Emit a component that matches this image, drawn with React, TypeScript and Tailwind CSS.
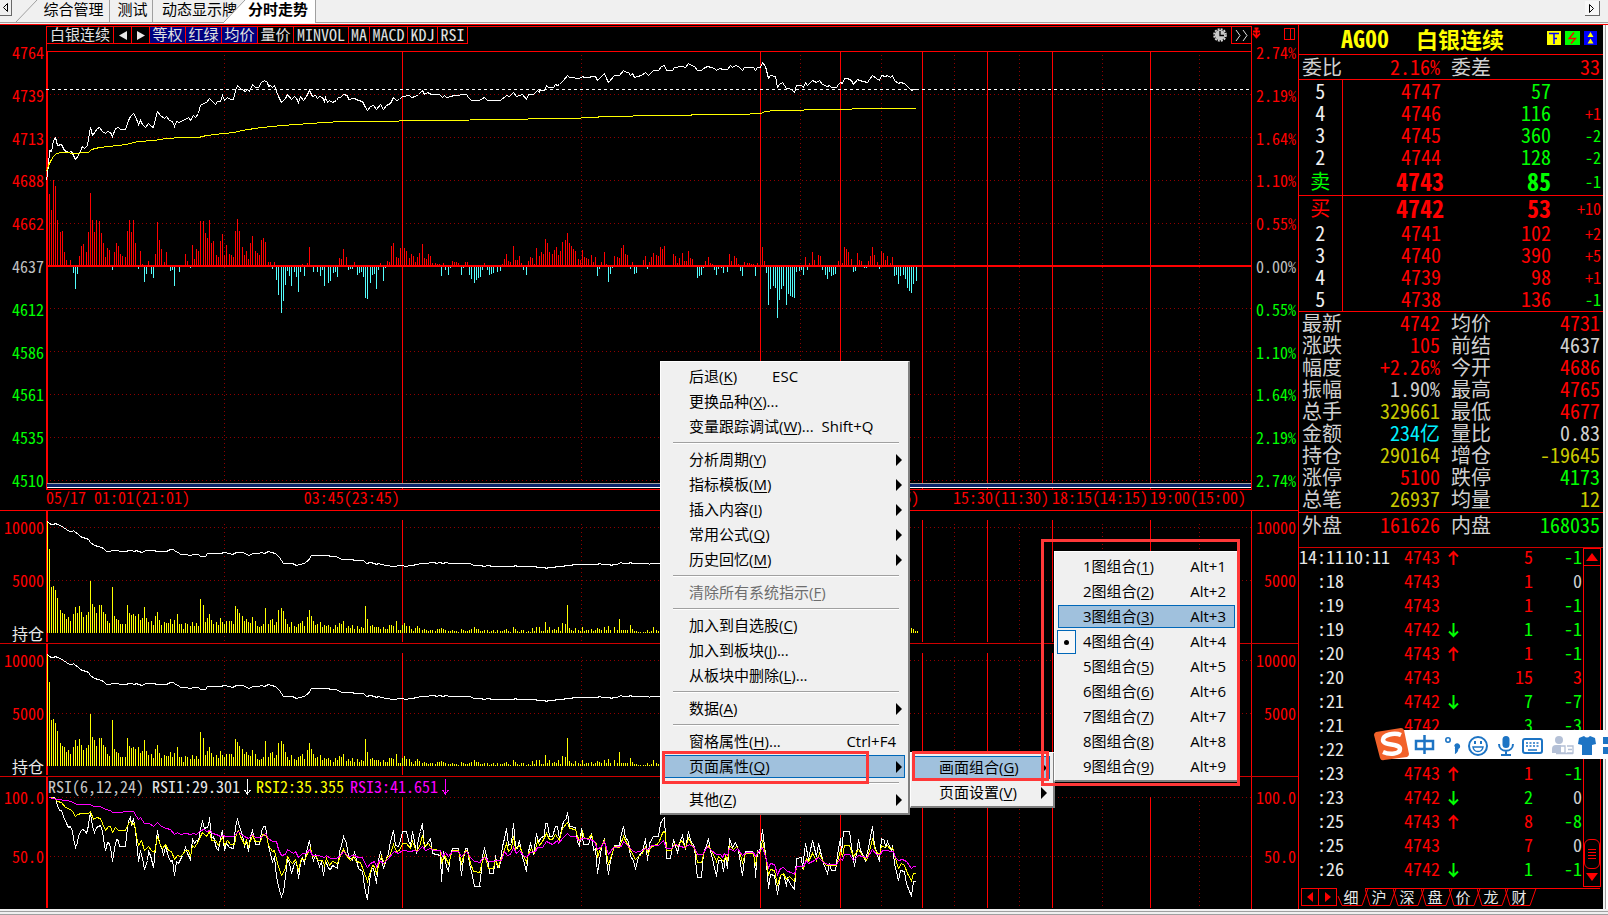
import type { ReactNode } from 'react';

const MONO = "font-['Noto_Sans_Mono_CJK_SC','Noto_Sans_CJK_SC',monospace]";
const UI = "font-['Open_Sans','Noto_Sans_CJK_SC',sans-serif]";

// series are stored as "x,y" pairs on a finer grid, SX / SY units to one chart unit
const SX = 2.904;
const SY = 3;

function parse(data: string, ox: number, oy: number, kx: number) {
  return data
    .trim()
    .split(/\s+/)
    .map((p) => {
      const [x, y] = p.split(',').map(Number);
      return [Math.floor(ox + x / kx), Math.floor(oy + y / SY)];
    });
}

const line = (data: string, ox: number, oy: number, kx: number) =>
  parse(data, ox, oy, kx)
    .map(([x, y]) => `${x + 0.5},${y + 0.5}`)
    .join(' ');

const bars = (data: string, ox: number, oy: number, base: number) =>
  parse(data, ox, oy, SY)
    .map(([x, y]) => `M${x + 0.5} ${base}V${y}`)
    .join('');

const PRICE_A =
  '136,540 140,495 144,450 150,455 155,420 162,413 168,435 180,433 188,450 198,457 208,455 214,465 220,478 228,465 240,440 246,445 254,437 258,415 263,382 270,405 282,385 290,382 298,395 305,400 312,393 320,398 326,408 336,385 345,382 350,388 364,388 372,360 380,350 388,340 393,350 403,373 408,360 414,373 422,382 432,370 440,378 446,382 457,333 466,345 478,355 484,350 492,360 500,363 507,379 514,365 522,368 530,362 540,357 546,352 552,362 562,345 568,352 576,340 582,315 590,310 600,307 608,295 616,305 626,312 632,305 640,303 647,287 653,300 660,293 668,298 678,297 684,270 690,257 698,265 706,270 712,275 718,268 724,273 734,254 742,262 752,262 760,248 768,240 776,247 780,258 786,255 790,262 797,256 804,275 810,290 818,307 828,295 836,284 846,299 854,290 860,296 866,306 874,290 880,302 890,290 900,270 908,290 916,287 922,294 928,288 936,293 942,305 946,293 950,306 956,302 966,306 978,300 984,292 990,293 998,284 1008,287 1012,297 1030,295 1040,302 1052,304 1060,323 1068,331 1076,320 1086,317 1094,329 1104,312 1114,328 1122,315 1134,310 1142,292 1150,300 1160,297 1168,288 1188,287 1196,291 1206,289 1216,284 1226,272 1232,284 1242,277 1254,283 1276,284 1284,292 1290,287 1296,292 1310,290 1318,285 1356,284 1360,291 1370,300 1392,301 1406,292 1416,300 1454,300 1470,285 1480,290 1492,278 1500,290 1516,284 1528,298 1536,284 1550,283 1560,272 1568,277';
const PRICE_B =
  '116,272 122,270 128,270 134,257 142,262 154,261 162,254 168,256 174,253 184,240 196,227 202,232 232,234 240,229 246,232 260,232 266,228 272,230 278,228 284,242 292,233 304,221 310,234 316,246 332,227 346,226 358,212 366,217 372,218 380,225 384,221 390,233 400,228 410,226 422,217 430,225 446,212 460,210 470,200 478,197 484,211 500,210 506,203 530,198 540,203 548,191 556,197 566,199 574,211 586,210 592,204 604,198 614,203 624,206 630,210 636,205 648,208 662,209 668,197 676,201 684,196 694,200 704,211 710,202 736,203 742,210 748,203 756,201 763,188 770,198 774,212 780,235 786,227 800,229 806,262 812,253 820,247 826,255 832,265 840,264 848,270 856,276 862,257 876,257 882,262 888,247 894,256 900,250 908,241 920,248 928,241 936,252 950,260 956,257 962,262 976,262 984,252 990,247 996,250 1000,236 1010,236 1020,241 1028,253 1038,237 1044,242 1066,247 1074,238 1082,227 1092,234 1102,240 1108,227 1120,229 1126,227 1134,232 1140,227 1146,240 1156,250 1162,247 1176,250 1186,263 1194,271 1200,268 1215,268';
const AVG_A =
  '136,515 142,495 148,485 156,470 164,461 180,458 228,459 236,457 258,457 266,449 290,441 340,436 366,432 400,425 450,420 480,416 530,413 576,412 600,405 650,400 680,396 700,391 760,383 820,375 900,370 990,365 1090,363 1230,360 1500,358 1568,356';
const AVG_B =
  '116,356 190,355 284,352 290,349 384,349 388,346 554,346 558,343 724,343 728,340 756,340 770,335 800,332 880,331 884,328 1020,328 1024,325 1208,325';

const UP_A =
  '28,54 34,102 40,12 46,30 52,132 61,168 67,165 73,228 79,252 91,252 118,240 124,210 130,204 139,228 145,168 151,51 157,132 163,168 169,132 178,135 184,171 190,201 196,243 202,216 208,222 223,228 229,201 235,210 241,234 247,240 256,243 262,165 268,132 274,168 280,132 286,201 301,225 307,264 325,255 346,234 352,138 358,192 364,219 373,258 379,228 436,234 442,255 457,207 463,249 469,219 475,225 481,135 490,135 496,171 502,186 508,132 514,201 520,195 529,237 535,243 541,195 547,174 553,237 559,207 568,234 574,237 580,243 586,165 592,129 598,165 607,213 613,237 619,225 625,249 631,201 637,180 646,225 652,231 658,237 664,192 670,186 676,198 685,258 691,258 703,258 787,264 802,261 808,213 898,246 904,249 910,219 919,243 943,258 1021,261 1042,255 1048,258 1054,210 1060,201 1069,243 1075,246 1081,216 1093,216 1099,225 1108,246 1114,234 1120,240 1126,258 1132,243 1138,231 1147,204 1153,246 1159,249 1165,234 1171,240 1177,261 1186,261 1192,264 1198,264 1210,261 1237,255 1243,258 1249,258 1255,261 1276,258 1282,258 1333,261 1387,264 1393,249 1399,234 1405,255 1411,258 1420,210 1426,252 1432,252 1438,240 1444,261 1465,255 1471,243 1477,246 1483,264 1489,216 1498,240';
const DOWN_A =
  '100,291 106,339 112,294 217,282 295,279 313,318 319,294 334,294 340,306 391,285 397,282 403,330 418,288 451,276 697,279 709,312 715,357 724,411 730,375 736,327 742,285 748,300 754,330 763,288 769,303 775,348 781,288 793,300 820,288 832,288 841,300 847,282 853,330 865,321 871,315 880,291 886,288 892,303 925,282 931,279 937,279 952,297 958,291 964,288 970,303 976,366 982,369 991,321 997,297 1003,294 1009,339 1015,282 1030,315 1036,276 1204,300 1216,282 1225,297 1231,276 1264,297 1270,276 1288,297 1294,309 1303,321 1309,312 1315,306 1321,303 1327,282 1342,282 1348,297 1354,294 1360,291 1372,288 1381,285 1450,282 1459,297';
const UP_B =
  '244,66 250,72 256,27 262,39 268,66 277,72 283,60 289,51 295,75 301,63 307,36 316,30 322,9 328,39 334,48 340,57 346,63 355,87 361,90 367,60 373,81 379,84 385,87 394,75 400,96 406,81 424,96 433,66 439,102 463,78 472,81 478,84 484,54 490,45 496,72 502,75 517,96 550,90 556,78 568,96 574,81 580,69 589,75 595,78 601,51 607,57 613,48 640,72 646,78 652,99 658,84 667,69 673,93 679,93 685,63 691,84 697,87 736,93 745,81 751,99 757,102 808,72 814,93 823,78 829,84 835,102 853,96 862,99 868,99 874,102 880,102 892,99 907,51 913,93 1036,81 1048,99 1057,66 1063,90 1075,75 1081,78 1135,93 1147,99 1153,51 1159,57 1165,66 1174,87 1192,69 1198,90 1204,93 1225,93 1231,78 1237,51 1243,75 1252,96 1264,63 1270,69 1276,90 1282,78 1291,99 1297,81';
const DOWN_B =
  '412,138 418,117 445,156 451,132 457,114 511,117 523,132 529,129 562,117 712,144 718,138 724,135 730,114 763,120 769,135 775,117 784,114 790,129 802,126 841,123 847,138 886,138 919,129 925,225 931,177 940,168 946,174 952,264 958,210 964,177 970,168 979,225 985,192 991,198 997,201 1003,204 1009,126 1018,123 1024,120 1030,135 1042,120 1087,120 1096,135 1102,147 1108,126 1114,138 1120,135 1126,132 1180,126 1186,123 1213,114 1219,114 1258,117 1303,138 1309,135 1315,162 1321,138 1330,135 1336,147 1342,174 1348,183 1354,189 1360,162 1369,153';

const VOL_A =
  '142,183 148,267 154,381 160,378 166,390 172,414 181,450 187,459 193,462 199,477 205,471 211,483 220,462 226,441 232,459 238,438 244,456 250,471 259,465 265,456 271,363 277,432 283,441 289,459 298,435 304,435 310,456 316,462 322,483 328,489 337,381 343,468 349,477 355,480 361,492 367,492 376,492 382,435 388,459 394,465 400,462 406,468 415,462 421,480 427,474 433,441 439,474 445,486 454,483 460,495 466,468 472,456 478,480 484,495 493,486 499,489 505,489 511,477 517,492 523,480 532,462 538,492 544,492 550,507 556,489 562,492 571,498 577,486 583,498 589,489 595,498 601,417 610,435 616,486 622,474 628,462 634,480 640,492 649,486 655,495 661,474 667,486 673,492 679,483 688,483 694,483 700,492 706,438 712,447 718,459 727,468 733,483 739,477 745,486 751,489 757,471 766,483 772,498 778,501 784,498 790,492 796,444 805,492 811,480 817,477 823,495 829,486 835,450 844,444 850,453 856,477 862,492 868,501 874,486 883,498 889,501 895,492 901,489 907,483 913,498 922,471 928,450 934,468 940,483 946,495 952,492 961,486 967,501 973,495 979,498 985,495 991,501 1000,507 1006,495 1012,501 1018,489 1024,492 1030,483 1039,504 1045,498 1051,504 1057,495 1063,507 1072,498 1078,507 1084,501 1090,504 1096,438 1102,477 1111,498 1117,495 1123,501 1129,501 1135,501 1141,507 1150,501 1156,507 1162,507 1168,495 1174,495 1180,498 1189,483 1195,510 1201,510';
const VOL_B =
  '7,375 13,369 19,378 28,378 34,387 40,393 46,384 52,378 58,384 67,390 73,387 79,390 85,393 91,390 97,390 106,393 112,387 118,387 124,384 130,387 136,390 145,393 151,393 157,390 163,393 169,393 175,396 184,387 190,390 196,393 202,393 208,390 214,387 223,381 229,387 235,387 241,393 247,393 253,390 262,390 268,396 274,393 280,390 286,396 292,390 301,393 307,393 313,390 319,387 325,393 331,396 340,381 346,387 352,393 358,396 364,390 370,390 379,396 385,393 391,396 397,384 403,393 409,381 418,381 424,393 430,393 436,366 442,390 448,381 457,390 463,387 469,390 475,381 481,393 487,369 496,372 502,315 508,384 514,390 520,393 526,384 535,390 541,393 547,381 553,393 559,390 565,390 574,387 580,393 586,390 592,384 598,387 604,390 613,381 619,390 625,378 631,390 643,381 652,390 658,357 664,390 670,390 676,390 682,390 691,375 697,387 703,393 709,393 715,396 721,396 730,396 736,396 742,390 748,396 754,393 760,381 769,390 775,393 1534,384 1540,387 1546,393 1552,393';
const OI_A =
  '142,183 148,189 154,193 160,193 166,189 172,193 181,195 190,202 199,207 208,213 216,214 220,210 226,216 232,220 240,229 246,233 258,234 265,238 271,247 283,256 295,258 304,262 310,265 320,273 328,275 337,271 352,272 360,274 378,274 384,272 395,270 402,274 408,271 414,274 428,276 436,272 460,271 472,274 500,274 510,268 520,267 526,274 534,278 542,282 556,282 570,287 580,284 594,283 602,289 616,289 622,280 660,280 672,277 688,280 698,284 708,277 730,277 738,283 748,287 758,281 774,280 784,277 794,280 806,274 814,278 826,281 838,292 850,310 878,310 890,315 898,313 912,311 920,305 926,300 934,286 984,286 990,289 1010,290 1024,298 1056,298 1064,301 1090,301 1098,311 1112,307 1122,311 1129,314 1135,310 1144,314 1160,317 1180,318 1200,317 1220,319 1228,316 1240,316 1246,313 1270,311 1302,308 1310,311 1318,307 1330,311 1336,307 1350,310 1412,310 1420,316 1440,316';
const OI_B =
  '240,196 253,199 262,196 280,199 340,199 346,196 352,199 406,199 412,202 434,202 439,205 445,202 464,202 470,199 490,199 496,196 514,196 520,193 592,193 598,190 608,193 628,193 634,196 640,193 652,193 661,187 670,190 684,190 691,187 697,190 745,190 748,193 752,190 860,190';

const RSI1_A =
  '148,112 160,113 166,115 172,135 178,152 184,150 190,170 198,190 206,203 210,200 216,215 220,235 226,262 232,248 236,228 242,215 248,208 254,210 260,220 264,195 268,170 272,160 278,200 284,218 290,203 300,197 306,215 310,235 316,270 322,248 328,250 334,280 338,303 342,265 350,237 354,240 358,258 376,258 380,225 386,185 390,170 394,195 400,175 406,215 412,270 416,303 420,270 426,295 434,328 442,300 446,273 450,285 460,322 466,265 472,212 478,248 486,270 490,285 496,260 504,290 510,305 516,300 524,345 530,303 536,310 546,285 552,270 556,262 562,280 572,298 576,235 582,250 588,240 594,245 600,205 606,185 614,205 624,200 629,173 634,235 640,230 648,265 656,270 662,235 667,210 673,272 680,250 688,262 700,265 706,200 712,178 718,200 726,225 732,260 740,245 746,275 752,230 758,210 766,252 778,252 784,215 790,200 796,200 802,240 808,270 818,305 824,290 830,350 838,390 845,410 850,395 856,350 862,295 868,310 874,340 882,310 888,305 895,355 902,310 908,295 914,310 920,275 928,240 934,280 940,300 946,285 952,300 958,320 964,305 970,345 976,300 984,325 990,328 996,315 1004,320 1012,325 1018,275 1024,255 1031,228 1038,250 1044,290 1056,300 1062,275 1068,300 1074,325 1086,335 1092,380 1098,410 1102,415 1108,365 1114,325 1120,325 1130,370 1136,300 1142,275 1150,325 1158,295 1166,280 1172,245 1180,210 1186,255 1196,260 1202,240 1208,215 1218,215 1224,240 1230,255 1236,215 1242,245 1248,280 1256,235 1262,215 1268,190 1274,262 1284,245 1290,235 1296,280 1320,285 1325,365 1330,275 1338,320 1345,335 1352,285 1358,265 1374,265 1378,290 1384,345 1390,295 1396,265 1402,265 1408,310 1416,350 1424,378 1440,380';
const RSI1_B =
  '58,380 62,330 66,290 72,262 76,290 82,310 86,340 96,340 102,285 108,322 116,322 122,260 128,235 135,205 140,255 150,250 155,190 160,260 166,265 172,240 178,280 184,300 192,335 198,275 206,250 214,282 222,220 228,248 234,235 244,225 248,190 254,190 260,228 270,228 276,200 282,200 288,235 294,208 300,185 308,175 313,158 318,200 334,202 340,245 346,258 354,205 360,252 374,252 382,220 388,270 394,265 400,340 406,300 412,262 420,235 426,300 432,342 438,300 448,255 462,255 468,220 474,200 480,232 490,245 496,290 504,300 510,328 518,290 530,275 538,235 544,300 550,250 562,228 576,228 582,190 590,175 594,172 600,295 612,295 620,237 632,278 640,240 646,225 654,268 664,215 670,240 680,260 688,330 690,352 700,352 708,280 716,255 721,235 728,270 736,310 744,350 750,300 760,300 766,335 772,290 776,325 784,235 792,262 800,248 808,270 814,310 820,345 828,275 850,275 854,295 858,352 864,270 870,280 878,208 884,255 890,310 896,385 902,342 912,345 922,402 930,345 938,340 948,380 952,355 964,375 970,388 976,295 992,293 996,325 1004,250 1012,298 1024,242 1034,290 1042,250 1048,275 1056,310 1066,340 1074,310 1078,330 1090,330 1098,265 1104,235 1108,280 1114,215 1130,215 1136,260 1146,320 1156,238 1164,270 1178,302 1186,262 1197,200 1204,255 1218,305 1224,235 1232,240 1236,262 1242,245 1252,270 1256,255 1262,310 1274,362 1280,330 1290,335 1298,370 1304,395 1311,405 1316,365 1323,365';
const RSI2_A =
  '148,112 166,114 172,125 184,128 196,142 210,148 218,155 226,168 232,163 244,160 256,161 264,160 272,155 280,178 288,172 300,175 308,190 316,210 324,198 330,200 338,218 346,203 356,210 376,210 384,190 390,185 396,192 402,190 408,230 414,255 424,240 434,270 444,258 454,272 462,278 466,265 472,230 480,255 488,265 496,252 506,272 514,275 524,298 532,285 540,290 548,282 556,270 564,270 572,290 578,255 584,262 596,245 602,230 608,218 618,228 628,215 634,240 646,240 656,255 668,228 674,255 682,242 690,252 702,252 708,220 714,210 722,230 732,252 740,240 746,260 756,225 766,245 780,245 788,222 798,225 806,255 816,275 824,270 832,310 845,345 856,325 862,290 870,305 878,310 886,298 895,330 904,295 912,300 920,285 930,265 938,290 946,285 956,300 966,300 974,315 978,295 988,315 996,305 1012,310 1020,285 1030,268 1040,285 1050,300 1060,290 1070,305 1082,308 1090,330 1102,365 1110,335 1118,315 1124,320 1130,340 1138,305 1144,290 1152,310 1162,290 1168,290 1180,252 1188,275 1198,272 1206,250 1220,250 1230,265 1238,245 1248,275 1258,258 1268,225 1274,260 1284,250 1296,268 1320,270 1325,310 1332,285 1345,310 1356,270 1376,272 1384,310 1396,272 1402,275 1410,310 1420,335 1440,338';
const RSI2_B =
  '58,338 64,305 72,285 78,305 84,325 98,325 104,300 112,318 122,285 128,268 135,250 142,275 150,265 155,230 162,268 172,255 182,280 194,307 200,280 208,265 216,280 224,240 230,255 240,245 250,220 260,238 270,238 278,222 288,240 298,205 313,188 318,205 334,208 340,230 348,240 356,215 362,235 374,235 382,222 388,245 396,250 400,292 408,265 420,240 432,312 440,285 450,260 464,262 474,230 484,248 494,270 510,298 518,290 528,282 538,262 546,280 552,262 576,250 584,225 592,215 596,218 600,272 614,272 622,250 632,260 644,242 654,262 664,235 674,255 684,270 690,306 702,306 710,275 721,255 732,278 744,305 752,290 766,305 772,290 776,302 784,255 794,268 804,258 812,275 820,308 830,280 852,280 858,315 864,275 872,275 878,240 886,285 896,345 902,328 912,330 922,375 932,345 940,340 948,358 956,350 970,365 976,318 994,318 998,325 1006,295 1012,305 1024,280 1034,300 1044,280 1054,300 1064,315 1092,317 1104,270 1110,290 1116,257 1132,257 1144,290 1156,268 1168,285 1180,300 1190,270 1197,237 1208,270 1218,287 1224,255 1234,262 1242,255 1250,268 1256,262 1264,295 1274,325 1282,310 1292,315 1300,340 1311,360 1316,340 1323,340';
const RSI3_A =
  '148,112 170,117 200,122 214,123 228,132 270,132 280,140 300,140 316,148 330,150 338,156 400,155 410,168 414,178 422,172 434,190 448,190 460,198 472,186 484,198 500,205 510,207 524,222 532,217 540,222 560,220 572,224 580,220 590,222 602,212 612,208 620,214 630,210 638,220 650,222 660,228 670,225 676,230 700,230 706,222 714,215 724,222 734,230 746,234 756,222 766,232 784,232 796,220 806,235 818,243 828,245 834,268 845,287 856,283 862,268 880,280 886,275 895,292 906,280 920,280 928,268 938,285 956,285 964,288 974,292 978,285 990,296 1010,295 1022,285 1030,275 1044,290 1064,285 1074,292 1086,292 1094,308 1102,322 1112,310 1122,305 1130,318 1138,302 1150,310 1166,295 1176,280 1184,275 1196,280 1206,270 1232,275 1244,272 1252,275 1260,265 1268,258 1276,270 1290,265 1300,270 1320,270 1328,288 1336,278 1346,290 1356,275 1374,275 1384,290 1400,275 1410,292 1422,305 1440,306';
const RSI3_B =
  '58,306 66,295 74,293 84,303 120,302 130,275 138,285 148,282 156,262 164,280 172,270 184,285 194,293 204,278 220,275 226,262 240,262 250,243 268,252 282,240 286,250 298,235 313,220 320,228 336,230 344,240 356,235 380,238 392,245 400,268 410,258 420,245 432,282 446,262 468,260 476,245 490,258 500,270 510,277 530,270 540,265 548,268 556,257 576,255 592,240 600,265 614,265 626,252 640,258 652,262 666,252 680,262 690,283 704,283 720,260 730,270 744,283 756,282 762,292 768,280 776,287 784,265 796,275 806,265 820,287 832,277 852,278 858,290 866,275 872,272 878,262 888,290 896,322 902,310 914,312 922,342 930,325 938,322 950,335 964,337 972,342 976,318 998,320 1006,300 1012,310 1030,302 1042,293 1054,305 1066,313 1094,312 1104,295 1112,300 1118,283 1132,284 1144,300 1158,285 1170,290 1184,292 1197,268 1210,282 1220,283 1228,270 1240,272 1252,275 1258,275 1266,292 1274,300 1284,298 1296,305 1311,325 1318,320 1323,320';

const SOLID_X = [402, 760, 840, 922, 987, 1052, 1150];
const DOTTED_X = [224, 581, 800, 881, 954, 1019, 1102, 1199];

interface GridProps {
  top: number;
  height: number;
  from: number;
  to: number;
  rows: number[];
  children: ReactNode;
}

function Chart({ top, height, from, to, rows, children }: GridProps) {
  return (
    <svg
      viewBox={`46 ${top} 1206 ${height}`}
      preserveAspectRatio="none"
      shapeRendering="crispEdges"
      fill="none"
      className="block h-full w-full"
    >
      {rows.map((y) => (
        <path key={y} d={`M50 ${y + 0.5}H1252`} stroke="#900000" strokeDasharray="1 3" />
      ))}
      {DOTTED_X.map((x) => (
        <path key={x} d={`M${x + 0.5} ${from + 4}V${to}`} stroke="#900000" strokeDasharray="1 3" />
      ))}
      {SOLID_X.map((x) => (
        <path key={x} d={`M${x + 0.5} ${from}V${to}`} stroke="#f00" />
      ))}
      <path d={`M47 ${top}V${to}`} stroke="#f00" strokeWidth="2" />
      {children}
      <path d={`M1251.5 ${top}V${top + height}`} stroke="#f00" />
    </svg>
  );
}

const LEFT_AXIS = [4764, 4739, 4713, 4688, 4662, 4637, 4612, 4586, 4561, 4535, 4510];
const RIGHT_AXIS = ['2.74%', '2.19%', '1.64%', '1.10%', '0.55%', '0.00%', '0.55%', '1.10%', '1.64%', '2.19%', '2.74%'];

const axisColor = (i: number) => (i < 5 ? 'text-[#f00]' : i === 5 ? 'text-[#c0c0c0]' : 'text-[#0f0]');

function PriceAxis({ labels }: { labels: (string | number)[] }) {
  return (
    <div className="flex h-[463px] flex-col justify-between pt-[19px] pr-[2px] text-right text-base leading-4">
      {labels.map((label, i) => (
        <span key={i} className={axisColor(i)}>
          {label}
        </span>
      ))}
    </div>
  );
}

const TOOLS = [
  { label: '白银连续', width: 'w-[67px]' },
  { label: '后一个', width: 'w-[18px]', path: 'M8 0v9L0 4.500z' },
  { label: '前一个', width: 'w-[18px]', path: 'M0 0v9l8-4.500z' },
  { label: '等权', width: 'w-[36px]', on: true },
  { label: '红绿', width: 'w-[36px]', on: true },
  { label: '均价', width: 'w-[36px]', on: true },
  { label: '量价', width: 'w-[36px]' },
  { label: 'MINVOL', width: 'w-[55px]', latin: true },
  { label: 'MA', width: 'w-[21px]', latin: true },
  { label: 'MACD', width: 'w-[38px]', latin: true },
  { label: 'KDJ', width: 'w-[30px]', latin: true },
  { label: 'RSI', width: 'w-[30px]', latin: true },
];

function Toolbar() {
  return (
    <div className="flex h-[24px] items-start border-r border-l border-[#f00]">
      {TOOLS.map((t) => (
        <button
          key={t.label}
          aria-label={t.label}
          className={`flex h-[17px] shrink-0 items-center justify-center border-r border-b border-[#f00] pb-[2px] leading-[14px] whitespace-nowrap text-[#e0e0e0] ${t.width} ${t.on ? 'bg-[#000080]' : ''} ${t.latin ? 'text-base' : 'text-[15px]'}`}
        >
          {t.path ? (
            <svg width="8" height="9" viewBox="0 0 8 9" className="mt-[2px]">
              <path d={t.path} fill="#e8e8e8" />
            </svg>
          ) : (
            t.label
          )}
        </button>
      ))}
      <button aria-label="时钟" className="mr-[4px] ml-auto flex h-[15px] w-[14px] items-center">
        <svg width="14" height="14" viewBox="0 0 14 14">
          <circle cx="7" cy="7" r="6" fill="none" stroke="#d8d8d8" strokeDasharray="2 1.14" strokeWidth="1.6" />
          <circle cx="7" cy="7" r="5.2" fill="#c8c8c8" />
          <path d="M7 3v4.500H11" stroke="#000" strokeWidth="1.3" fill="none" />
        </svg>
      </button>
      <button aria-label="更多" className="flex h-[17px] w-[20px] items-center justify-center border-b border-l border-[#f00]">
        <svg width="14" height="13" viewBox="0 0 14 13" fill="none" stroke="#e0e0e0">
          <path d="M1 1l4 5.5L1 12M8 1l4 5.5L8 12" />
        </svg>
      </button>
    </div>
  );
}

function PricePane() {
  return (
    <section className="grid grid-cols-[46px_1fr_46px]">
      <PriceAxis labels={LEFT_AXIS} />
      <div className="mt-px min-w-0 border-t border-[#f00]">
        <Toolbar />
        <div className="h-[439px]">
          <Chart top={51} height={439} from={51} to={489} rows={[94, 137, 180, 223, 308, 351, 394, 437, 480]}>
            <path d="M46 51.5H1252" stroke="#f00" />
            <path d={bars(UP_A, 40, 176, 265) + bars(UP_B, 460, 230, 265)} stroke="#f00" />
            <path d={bars(DOWN_A, 40, 176, 267) + bars(DOWN_B, 460, 230, 267)} stroke="#54fcfc" />
            <path d="M46 266H1252" stroke="#f00" strokeWidth="2" />
            <path d="M46 89.5H1250" stroke="#fff" strokeDasharray="3 3" />
            <polyline points={line(PRICE_A, 0, 0, SX) + ' ' + line(PRICE_B, 500, 0, SX)} stroke="#fff" />
            <polyline points={line(AVG_A, 0, 0, SX) + ' ' + line(AVG_B, 500, 0, SX)} stroke="#ff0" />
            <rect x="47" y="483" width="1204" height="1" fill="#a0a0a0" />
            <rect x="47" y="484" width="1204" height="3" fill="#0a246a" />
            <rect x="47" y="487" width="1204" height="1" fill="#fff" />
            <path d="M46 489.5H1252" stroke="#f00" />
          </Chart>
        </div>
        <div className="grid h-[20px] grid-cols-[145fr_211fr_520fr_130fr_99fr_101fr] text-right text-base leading-[15px] whitespace-nowrap text-[#f00]">
          <span className="text-left">05/17 01:01(21:01)</span>
          <span className="pr-[2px]">03:45(23:45)</span>
          <span className="pr-[2px]">14:15(10:15)</span>
          <span className="pr-[2px]">15:30(11:30)</span>
          <span className="pr-[2px]">18:15(14:15)</span>
          <span className="pr-[6px]">19:00(15:00)</span>
        </div>
      </div>
      <div className="relative">
        <PriceAxis labels={RIGHT_AXIS} />
        <button aria-label="锚定" className="absolute top-[2px] left-0">
          <svg width="9" height="12" viewBox="0 0 9 12" stroke="#f00" fill="none">
            <path d="M4.500 1v9M2.500 1.500h4M1 4.500h7M1 6.500l3.500 4 3.500-4" strokeWidth="1.8" />
          </svg>
        </button>
        <button aria-label="分栏" className="absolute top-[2px] right-[2px]">
          <svg width="13" height="14" viewBox="0 0 13 14" stroke="#f00" fill="none" shapeRendering="crispEdges">
            <path d="M1.5 1.5h10v11h-10zM7.5 1.5v11" />
          </svg>
        </button>
      </div>
    </section>
  );
}

function SideLabels({ labels, rsi }: { labels: string[]; rsi?: boolean }) {
  return (
    <div className={`flex flex-col pr-[2px] text-right text-base leading-5 text-[#f00] ${rsi ? 'gap-[39px] pt-[10px]' : 'gap-[33px] pt-[6px]'}`}>
      {labels.map((l) => (
        <span key={l} className={`h-5 ${l === '持仓' ? 'text-[#e8e8e8]' : ''}`}>
          {l}
        </span>
      ))}
    </div>
  );
}

function VolumePane({ first }: { first?: boolean }) {
  return (
    <section className={`grid h-[133px] grid-cols-[46px_1fr_46px] border-t ${first ? 'border-[#f00]' : 'border-[#d00000]'}`}>
      <SideLabels labels={['10000', '5000', '持仓']} />
      <div className="h-[132px] min-w-0">
        <Chart top={511} height={132} from={520} to={642} rows={[527, 580]}>
          <path d={bars(VOL_A, 0, 460, 633) + bars(VOL_B, 400, 500, 633)} stroke="#ff0" />
          <polyline points={line(OI_A, 0, 460, SY) + ' ' + line(OI_B, 400, 500, SY)} stroke="#fff" />
        </Chart>
      </div>
      <SideLabels labels={['10000', '5000']} />
    </section>
  );
}

function RsiPane() {
  return (
    <section className="grid h-[133px] grid-cols-[46px_1fr_46px] border-t border-[#d00000]">
      <SideLabels labels={['100.0', '50.0']} rsi />
      <div className="relative h-[132px] min-w-0">
        <Chart top={777} height={132} from={797} to={908} rows={[797, 856]}>
          <polyline points={line(RSI1_A, 0, 760, SY) + ' ' + line(RSI1_B, 460, 760, SX)} stroke="#fff" />
          <polyline points={line(RSI2_A, 0, 760, SY) + ' ' + line(RSI2_B, 460, 760, SX)} stroke="#ff0" />
          <polyline points={line(RSI3_A, 0, 760, SY) + ' ' + line(RSI3_B, 460, 760, SX)} stroke="#f0f" />
        </Chart>
        <div className="absolute top-0 left-[2px] flex text-base leading-[18px] whitespace-nowrap">
          <span className="mr-2 text-[#c8c8c8]">RSI(6,12,24)</span>
          <span className="text-[#e8e8e8]">RSI1:29.301</span>
          <DownArrow color="#fff" />
          <span className="text-[#ff0]">RSI2:35.355</span>
          <span className="ml-[6px] text-[#f0f]">RSI3:41.651</span>
          <DownArrow color="#f0f" />
        </div>
      </div>
      <SideLabels labels={['100.0', '50.0']} rsi />
    </section>
  );
}

function DownArrow({ color }: { color: string }) {
  return (
    <svg width="16" height="20" viewBox="0 0 16 20" fill="none" stroke={color} shapeRendering="crispEdges">
      <path d="M7.5 2v15M4.5 13l3 4 3-4" />
    </svg>
  );
}

const R = 'text-[#f00]';
const G = 'text-[#0f0]';
const W = 'text-[#d0d0d0]';
const Y = 'text-[#c8c800]';
const C = 'text-[#00f0ff]';

const SELLS = [
  ['5', '4747', '57', ''],
  ['4', '4746', '116', '+1'],
  ['3', '4745', '360', '-2'],
  ['2', '4744', '128', '-2'],
  ['卖', '4743', '85', '-1'],
];
const BUYS = [
  ['买', '4742', '53', '+10'],
  ['2', '4741', '102', '+2'],
  ['3', '4740', '390', '+5'],
  ['4', '4739', '98', '+1'],
  ['5', '4738', '136', '-1'],
];

function Book({ rows, side }: { rows: string[][]; side: 'buy' | 'sell' }) {
  const tone = side === 'buy' ? R : G;
  const cell = side === 'buy' ? 'p-0 pb-[2px] leading-[20px]' : 'p-0 leading-[22px]';
  return (
    <table className="w-full table-fixed border-b border-[#f00] text-xl">
      <colgroup>
        <col className="w-[43px]" />
        <col className="w-[102px]" />
        <col className="w-[107px]" />
        <col />
      </colgroup>
      <tbody>
        {rows.map(([level, price, qty, change]) => {
          const best = level === '卖' || level === '买';
          return (
            <tr key={level} className={best ? 'h-[27px]' : 'h-[22px]'}>
              <th className={`border-r border-[#f00] text-center font-normal ${cell} ${best ? tone : 'text-[#f0f0f0]'}`}>{level}</th>
              <td className={`text-right ${cell} ${R} ${best ? 'text-2xl font-bold' : 'pr-[3px]'}`}>{price}</td>
              <td className={`text-right ${cell} ${tone} ${best ? 'text-2xl font-bold' : ''}`}>{qty}</td>
              <td className={`pr-[2px] text-right text-base ${cell} ${change[0] === '-' ? G : R}`}>{change}</td>
            </tr>
          );
        })}
      </tbody>
    </table>
  );
}

const QUOTES = [
  ['最新', '4742', R, '均价', '4731', R],
  ['涨跌', '105', R, '前结', '4637', W],
  ['幅度', '+2.26%', R, '今开', '4686', R],
  ['振幅', '1.90%', W, '最高', '4765', R],
  ['总手', '329661', Y, '最低', '4677', R],
  ['金额', '234亿', C, '量比', '0.83', W],
  ['持仓', '290164', Y, '增仓', '-19645', Y],
  ['涨停', '5100', R, '跌停', '4173', G],
  ['总笔', '26937', Y, '均量', '12', Y],
];

function QuoteTable({ rows, className }: { rows: string[][]; className: string }) {
  return (
    <table className={`w-full table-fixed text-xl ${className}`}>
      <colgroup>
        <col className="w-[48px]" />
        <col className="w-[93px]" />
        <col className="w-[60px]" />
        <col />
      </colgroup>
      <tbody>
        {rows.map(([a, av, ac, b, bv, bc]) => (
          <tr key={a} className="h-[22px]">
            <th className="p-0 pl-[3px] text-left leading-[22px] font-normal text-[#d0d0d0]">{a}</th>
            <td className={`p-0 text-right leading-[22px] ${ac}`}>{av}</td>
            <th className="p-0 pl-[11px] text-left leading-[22px] font-normal text-[#d0d0d0]">{b}</th>
            <td className={`p-0 pr-[3px] text-right leading-[22px] ${bc}`}>{bv}</td>
          </tr>
        ))}
      </tbody>
    </table>
  );
}

const TICKS = [
  ['14:11', '10:11', '4743', 'up', '5', '-1'],
  [':18', '', '4743', '', '1', '0'],
  [':19', '', '4743', '', '1', '-1'],
  [':19', '', '4742', 'down', '1', '-1'],
  [':20', '', '4743', 'up', '1', '-1'],
  [':20', '', '4743', '', '15', '3'],
  [':21', '', '4742', 'down', '7', '-7'],
  [':21', '', '4742', '', '3', '-3'],
  [':22', '', '', '', '', ''],
  [':23', '', '4743', 'up', '1', '-1'],
  [':23', '', '4742', 'down', '2', '0'],
  [':25', '', '4743', 'up', '8', '-8'],
  [':25', '', '4743', '', '7', '0'],
  [':26', '', '4742', 'down', '1', '-1'],
];

const tickColor = (v: string) => (v[0] === '-' ? G : v === '0' ? W : R);

function Ticks() {
  return (
    <div className="flex h-[340px] border-t border-[#d00000]">
      <div className="min-w-0 flex-1">
        <table className="w-full table-fixed text-lg leading-[17px]">
          <colgroup>
            <col className="w-[45px]" />
            <col className="w-[46px]" />
            <col className="w-[50px]" />
            <col className="w-[27px]" />
            <col className="w-[66px]" />
            <col />
          </colgroup>
          <tbody>
            {TICKS.map(([t1, t2, price, dir, vol, chg], i) => (
              <tr key={i} className="h-[24px] text-right align-top">
                <td className="p-0 text-[#e8e8e8]">{t1}</td>
                <td className="p-0 text-[#e8e8e8]">{t2}</td>
                <td className={`p-0 ${R}`}>{price}</td>
                <td className="p-0 pt-[2px]">
                  {dir && (
                    <svg width="11" height="16" viewBox="0 0 11 16" fill="none" stroke={dir === 'up' ? '#f00' : '#0f0'} strokeWidth="2" className="mx-auto block">
                      <path d={dir === 'up' ? 'M5.5 15V2M1 6.5L5.5 2 10 6.5' : 'M5.5 1v13M1 9.500L5.500 14 10 9.500'} />
                    </svg>
                  )}
                </td>
                <td className={`p-0 ${dir === 'down' || vol === '3' ? G : R}`}>{vol}</td>
                <td className={`p-0 ${tickColor(chg)}`}>{chg}</td>
              </tr>
            ))}
          </tbody>
        </table>
      </div>
      <div className="mr-[2px] ml-[1px] flex w-[18px] flex-col border border-[#f00]">
        <button aria-label="上翻" className="flex h-[17px] items-center justify-center border-b border-[#f00]">
          <svg width="12" height="8" viewBox="0 0 12 8">
            <path d="M6 0l6 8H0z" fill="#f00" />
          </svg>
        </button>
        <div className="mt-auto flex h-[30px] flex-col items-center justify-center gap-[2px] rounded-md border border-[#f00]">
          <span className="h-px w-2 bg-[#f00]" />
          <span className="h-px w-2 bg-[#f00]" />
          <span className="h-px w-2 bg-[#f00]" />
          <span className="h-px w-2 bg-[#f00]" />
        </div>
        <button aria-label="下翻" className="flex h-[17px] items-center justify-center">
          <svg width="12" height="8" viewBox="0 0 12 8">
            <path d="M0 0h12L6 8z" fill="#f00" />
          </svg>
        </button>
      </div>
    </div>
  );
}

function SheetTabs() {
  return (
    <div className="mt-[1px] flex h-[18px] pl-[2px]">
      <button aria-label="左" className="flex w-[18px] items-center justify-center border border-[#f00]">
        <svg width="6" height="10" viewBox="0 0 6 10">
          <path d="M6 0v10L0 5z" fill="#f00" />
        </svg>
      </button>
      <button aria-label="右" className="flex w-[18px] items-center justify-center border border-l-0 border-[#f00]">
        <svg width="6" height="10" viewBox="0 0 6 10">
          <path d="M0 0v10l6-5z" fill="#f00" />
        </svg>
      </button>
      <div className="flex">
        {['细', '沪', '深', '盘', '价', '龙', '财'].map((t, i) => (
          <button key={t} className="relative w-[28px] text-center text-[15px] leading-[18px] text-[#e8e8e8]">
            <svg className="absolute top-0 left-0" width="32" height="18" viewBox="0 0 32 18" fill="none" stroke="#f00">
              <path d={i === 0 ? 'M1 8l4 9.500h20L31 .5' : 'M0 .5L5 17.500h20L31 .5'} />
            </svg>
            {t}
          </button>
        ))}
      </div>
      <div className="relative flex-1">
        <div className="absolute top-0 right-[3px] -left-[168px] border-t border-[#f00]" />
      </div>
    </div>
  );
}

function QuotePanel() {
  return (
    <aside className="flex w-[310px] shrink-0">
      <div className="flex min-w-0 flex-1 flex-col border-l border-[#f00] bg-black">
        <h1 className="flex h-[30px] items-center border-b border-[#f00] pb-[3px] pl-[42px] text-[22px] font-bold whitespace-nowrap text-[#ff0]">
          <span className="w-[75px] text-2xl leading-[26px]">AG00</span>
          <span className="leading-[26px]">白银连续</span>
          <span className="mr-[6px] ml-auto flex gap-[4px]">
            <svg width="14" height="14" viewBox="0 0 14 14">
              <path d="M0 0h14v14H0z" fill="#ff0" />
              <path d="M2 2.500h10M7 2.500V13M7 7.500h3" stroke="#00f" strokeWidth="1.500" fill="none" />
            </svg>
            <svg width="15" height="14" viewBox="0 0 15 14">
              <path d="M0 0h15v14H0z" fill="#0f0" />
              <path d="M9 1.500L4 7.500h6.500L6 12.500" stroke="#f00" strokeWidth="1.300" fill="none" />
            </svg>
            <svg width="13" height="14" viewBox="0 0 13 14">
              <path d="M0 0h13v14H0z" fill="#00f" />
              <path d="M6.500 1L9.500 6h-6zM6.500 7.500l3 5h-6z" fill="#ff0" />
            </svg>
          </span>
        </h1>
        <QuoteTable rows={[['委比', '2.16%', R, '委差', '33', R]]} className="h-[25px] border-b border-[#f00]" />
        <Book rows={SELLS} side="sell" />
        <Book rows={BUYS} side="buy" />
        <div className="border-b border-[#f00] pb-[2px]">
          <QuoteTable rows={QUOTES} className="" />
        </div>
        <div className="h-[34px] pt-[1px]">
          <QuoteTable rows={[['外盘', '161626', R, '内盘', '168035', G]]} className="" />
        </div>
        <Ticks />
        <SheetTabs />
      </div>
      <div className="w-[5px] border-l-2 border-[#f0f0f0] bg-white">
        <div className="h-full border-l border-[#a0a0a0]" />
      </div>
    </aside>
  );
}

interface Item {
  text: string;
  hot: string;
  tail?: string;
  key2?: string;
  keyPos?: string;
  arrow?: boolean;
  disabled?: boolean;
  active?: boolean;
  checked?: boolean;
}

const MAIN_MENU: (Item | null)[] = [
  { text: '后退', hot: 'K', key2: 'ESC', keyPos: 'ml-[35px]' },
  { text: '更换品种', hot: 'X', tail: '...' },
  { text: '变量跟踪调试', hot: 'W', tail: '...', key2: 'Shift+Q', keyPos: 'ml-[8px]' },
  null,
  { text: '分析周期', hot: 'Y', arrow: true },
  { text: '指标模板', hot: 'M', arrow: true },
  { text: '插入内容', hot: 'I', arrow: true },
  { text: '常用公式', hot: 'Q', arrow: true },
  { text: '历史回忆', hot: 'M', arrow: true },
  null,
  { text: '清除所有系统指示', hot: 'F', disabled: true },
  null,
  { text: '加入到自选股', hot: 'C' },
  { text: '加入到板块', hot: 'J', tail: '...' },
  { text: '从板块中删除', hot: 'L', tail: '...' },
  null,
  { text: '数据', hot: 'A', arrow: true },
  null,
  { text: '窗格属性', hot: 'H', tail: '...', key2: 'Ctrl+F4', keyPos: 'ml-auto mr-[8px]' },
  { text: '页面属性', hot: 'Q', arrow: true, active: true },
  null,
  { text: '其他', hot: 'Z', arrow: true },
];

const PAGE_MENU: Item[] = [
  { text: '画面组合', hot: 'G', arrow: true, active: true },
  { text: '页面设置', hot: 'V', arrow: true },
];

const LAYOUT_MENU: Item[] = [1, 2, 3, 4, 5, 6, 7, 8, 9].map((n) => ({
  text: `${n}图组合`,
  hot: `${n}`,
  key2: `Alt+${n}`,
  keyPos: 'ml-auto mr-[8px]',
  active: n === 3,
  checked: n === 4,
}));

function Menu({ items, className }: { items: (Item | null)[]; className: string }) {
  return (
    <div role="menu" className={`absolute flex flex-col border-t border-r-2 border-b-2 border-l border-t-white border-r-[#808080] border-b-[#808080] border-l-white bg-[#f0f0f0] px-[3px] pt-[2px] pb-[1px] text-[15px] text-black ${UI} ${className}`}>
      {items.map((item, i) =>
        item === null ? (
          <div key={i} className="mr-[6px] ml-[9px] h-[8px] pt-[3px]">
            <div className="border-t border-b border-t-[#a0a0a0] border-b-white" />
          </div>
        ) : (
          <button
            key={i}
            role="menuitem"
            disabled={item.disabled}
            className={`relative my-[1px] flex h-[23px] w-full items-center border pl-[24px] text-left whitespace-nowrap ${item.active ? 'border-[#0067b8] bg-[#a0c1dd]' : 'border-transparent'} ${item.disabled ? 'text-[#6d6d6d]' : ''}`}
          >
            {item.checked && (
              <span className="absolute -top-px left-[-2px] flex h-[24px] w-[19px] items-center justify-center border border-[#0067b8] bg-[#f8f8f8]">
                <span className="size-[5px] rounded-full bg-black" />
              </span>
            )}
            <span>
              {item.text}(<u className="underline-offset-2">{item.hot}</u>){item.tail}
            </span>
            {item.key2 && <span className={item.keyPos}>{item.key2}</span>}
            {item.arrow && (
              <svg width="6" height="12" viewBox="0 0 6 12" className="mr-[2px] ml-auto">
                <path d="M0 0l6 6-6 6z" fill="#000" />
              </svg>
            )}
          </button>
        ),
      )}
    </div>
  );
}

function ImeBar() {
  return (
    <div className="absolute top-[726px] right-0 flex h-[36px] w-[236px] items-center overflow-hidden">
      <div className="absolute top-[4px] right-0 h-[29px] w-[218px] bg-white" />
      <svg width="236" height="36" viewBox="0 0 236 36" className="relative shrink-0" fill="none" stroke="#1d74c4" strokeWidth="2">
        <g>
          <path d="M4 6L29 2q2 0 3 2l5 24q0 2-2 3L12 34q-3 1-4-2L2 9q0-2 2-3z" fill="#f2622a" stroke="none" />
          <path d="M29 9C22 6 11 9 11 14c0 6 17 3 17 9 0 5-10 6-17 3" stroke="#fff" strokeWidth="4.500" />
        </g>
        <path d="M44 15h17v8H44zM52.500 9v19" strokeWidth="2.500" />
        <circle cx="76" cy="14" r="2.200" strokeWidth="1.600" />
        <path d="M83 20.500a2.200 2.200 0 1 1 2 2c1-.5 1 3-2 5" fill="#1d74c4" strokeWidth="1.500" />
        <circle cx="106" cy="20" r="9" />
        <path d="M101 21c1 6 9 6 10 0z" strokeWidth="1.500" />
        <path d="M103 15v3M109 15v3" />
        <rect x="130.500" y="10" width="7" height="12" rx="3.500" fill="#1d74c4" stroke="none" />
        <path d="M127 18c0 9 14 9 14 0M134 25v4M129 29h10" />
        <rect x="151" y="13" width="19" height="14" rx="2" />
        <path d="M154 17h2m1.500 0h2m1.500 0h2m1.500 0h2M154 20h2m1.500 0h2m1.500 0h2m1.500 0h2M156 24h9" strokeWidth="1.600" />
        <g stroke="none" fill="#b4c0d6">
          <circle cx="187" cy="14" r="4" />
          <path d="M180 27v-4q0-4 4-4h5v8z" />
        </g>
        <path d="M187 20h6v7h-6zM195 20h6v7h-6M196 23.500h4M184 27.500h17" stroke="#b4c0d6" strokeWidth="1.300" />
        <path d="M207 12l5-2q3 3 6 0l5 2 1 6-4 1v10h-10V19l-4-1z" fill="#1d74c4" stroke="none" />
        <path d="M231 11h5v7h-5zM231 21h5v7h-5z" fill="#1d74c4" stroke="none" />
      </svg>
    </div>
  );
}

function TopTabs() {
  return (
    <header className={`h-[25px] border-b border-[#f00] bg-[#f0f0f0] text-[15px] text-black ${UI}`}>
      <nav className="flex h-[23px] items-stretch border-b border-[#a0a0a0] leading-[19px] whitespace-nowrap">
        <button aria-label="向左" className="flex h-[16px] w-[12px] items-center justify-center border-r border-b border-[#696969]">
          <svg width="6" height="9" viewBox="0 0 6 9" fill="none" stroke="#000">
            <path d="M4.500 .5v8l-4-4z" />
          </svg>
        </button>
        <svg width="26" height="22" viewBox="0 0 26 22" fill="none" stroke="#a0a0a0">
          <path d="M4 22L25 0" />
        </svg>
        <button className="w-[72px] border-r border-[#a0a0a0] pb-[3px]">综合管理</button>
        <button className="w-[43px] border-r border-[#a0a0a0] pb-[3px] pl-[3px]">测试</button>
        <button className="w-[71px] pb-[3px] pl-[9px] text-left">动态显示牌</button>
        <svg width="22" height="23" viewBox="0 0 22 23" stroke="#a0a0a0" className="relative">
          <path d="M0 22L21 0H22V23H0z" fill="#fff" stroke="none" />
          <path d="M0 22L21 0" />
        </svg>
        <button className="relative -mb-px w-[70px] border-r border-[#a0a0a0] bg-white pr-[5px] pb-[4px] font-bold">分时走势</button>
        <button aria-label="向右" className="mt-[1px] mr-[8px] ml-auto flex h-[15px] w-[15px] items-center justify-center border-r border-b border-[#696969] bg-[#f8f8f8]">
          <svg width="6" height="9" viewBox="0 0 6 9" fill="none" stroke="#000">
            <path d="M.5 .5v8l4-4z" />
          </svg>
        </button>
      </nav>
    </header>
  );
}

export default function App() {
  return (
    <div className={`relative min-h-screen overflow-hidden bg-[#f0f0f0] ${MONO}`}>
      <TopTabs />
      <main className="flex">
        <div className="min-w-0 flex-1 bg-black">
          <PricePane />
          <VolumePane first />
          <VolumePane />
          <RsiPane />
        </div>
        <QuotePanel />
      </main>
      <footer className="mt-[2px] h-[4px] border-t border-b border-[#a0a0a0]" />

      <Menu items={MAIN_MENU} className="top-[361px] left-[660px] w-[250px]" />
      <Menu items={PAGE_MENU} className="top-[752px] left-[910px] w-[145px]" />
      <Menu items={LAYOUT_MENU} className="top-[551px] left-[1054px] w-[186px]" />
      <div className="pointer-events-none absolute top-[751px] left-[662px] h-[33px] w-[207px] border-3 border-[#ff3838]" />
      <div className="pointer-events-none absolute top-[751px] left-[912px] h-[30px] w-[137px] border-3 border-[#ff3838]" />
      <div className="pointer-events-none absolute top-[539px] left-[1041px] h-[247px] w-[199px] border-3 border-[#ff3838]" />
      <ImeBar />
    </div>
  );
}
